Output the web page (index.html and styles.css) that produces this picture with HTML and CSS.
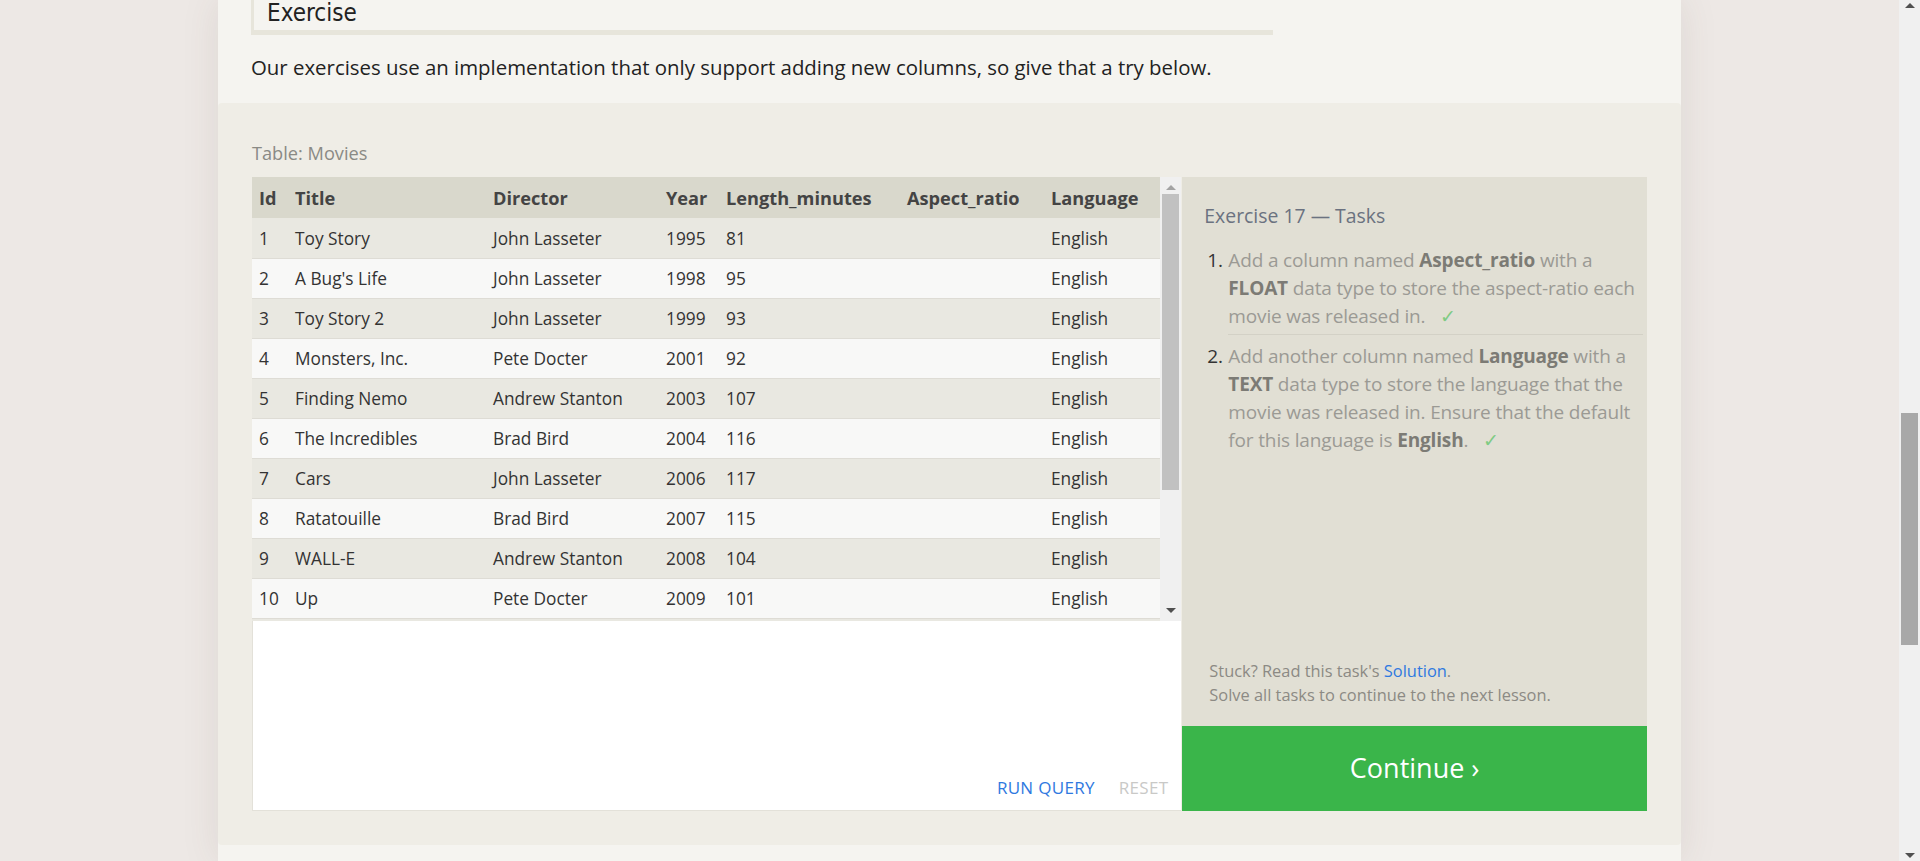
FILE: index.html
```html
<!DOCTYPE html>
<html lang="en">
<head>
<meta charset="utf-8">
<title>SQL Lesson – Altering tables</title>
<link rel="stylesheet" href="styles.css">
</head>
<body>
<div class="viewport">
  <div class="page">
    <div class="column">
      <div class="intro">
        <h2 class="ex-heading">Exercise</h2>
        <p class="lead">Our exercises use an implementation that only support adding new columns, so give that a try below.</p>
      </div>
      <section class="exercise">
        <div class="table-label">Table: Movies</div>
        <div class="workspace">
          <div class="left">
            <div class="table-wrap">
              <div class="table-clip">
                <table class="movies">
                  <colgroup>
                    <col class="c-id"><col class="c-title"><col class="c-dir"><col class="c-year"><col class="c-len"><col class="c-asp"><col class="c-lang">
                  </colgroup>
                  <thead>
                    <tr><th>Id</th><th>Title</th><th>Director</th><th>Year</th><th>Length_minutes</th><th>Aspect_ratio</th><th>Language</th></tr>
                  </thead>
                  <tbody>
                    <tr><td>1</td><td>Toy Story</td><td>John Lasseter</td><td>1995</td><td>81</td><td></td><td>English</td></tr>
                    <tr><td>2</td><td>A Bug's Life</td><td>John Lasseter</td><td>1998</td><td>95</td><td></td><td>English</td></tr>
                    <tr><td>3</td><td>Toy Story 2</td><td>John Lasseter</td><td>1999</td><td>93</td><td></td><td>English</td></tr>
                    <tr><td>4</td><td>Monsters, Inc.</td><td>Pete Docter</td><td>2001</td><td>92</td><td></td><td>English</td></tr>
                    <tr><td>5</td><td>Finding Nemo</td><td>Andrew Stanton</td><td>2003</td><td>107</td><td></td><td>English</td></tr>
                    <tr><td>6</td><td>The Incredibles</td><td>Brad Bird</td><td>2004</td><td>116</td><td></td><td>English</td></tr>
                    <tr><td>7</td><td>Cars</td><td>John Lasseter</td><td>2006</td><td>117</td><td></td><td>English</td></tr>
                    <tr><td>8</td><td>Ratatouille</td><td>Brad Bird</td><td>2007</td><td>115</td><td></td><td>English</td></tr>
                    <tr><td>9</td><td>WALL-E</td><td>Andrew Stanton</td><td>2008</td><td>104</td><td></td><td>English</td></tr>
                    <tr><td>10</td><td>Up</td><td>Pete Docter</td><td>2009</td><td>101</td><td></td><td>English</td></tr>
                    <tr class="peek"><td></td><td></td><td></td><td></td><td></td><td></td><td></td></tr>
                  </tbody>
                </table>
              </div>
              <div class="vscroll">
                <span class="arrow up"></span>
                <div class="track"><div class="thumb"></div></div>
                <span class="arrow down"></span>
              </div>
            </div>
            <div class="editor">
              <div class="editor-actions">
                <span class="run">RUN QUERY</span>
                <span class="reset">RESET</span>
              </div>
            </div>
          </div>
          <div class="right">
            <div class="tasks">
              <h3 class="tasks-title">Exercise 17 — Tasks</h3>
              <ol class="task-list">
                <li class="task"><span class="num">1.</span><span class="task-text">Add a column named <b>Aspect_ratio</b> with a <b>FLOAT</b> data type to store the aspect-ratio each movie was released in. <span class="check">✓</span></span></li>
                <li class="task"><span class="num">2.</span><span class="task-text">Add another column named <b>Language</b> with a <b>TEXT</b> data type to store the language that the movie was released in. Ensure that the default for this language is <b>English</b>. <span class="check">✓</span></span></li>
              </ol>
            </div>
            <div class="help">
              <div>Stuck? Read this task's <span class="link">Solution</span>.</div>
              <div>Solve all tasks to continue to the next lesson.</div>
            </div>
            <div class="continue">Continue ›</div>
          </div>
        </div>
      </section>
      <div class="footer-strip"></div>
    </div>
  </div>
  <div class="page-scrollbar">
    <span class="parrow pup"></span>
    <div class="ptrack"><div class="pthumb"></div></div>
    <span class="parrow pdown"></span>
  </div>
</div>
</body>
</html>
```

FILE: styles.css
```css
* { box-sizing: border-box; }

html, body {
  margin: 0;
  padding: 0;
  height: 861px;
  overflow: hidden;
}

body {
  font-family: "Open Sans", "Noto Sans", sans-serif;
  color: #333;
  background: #ede8e5;
}

.viewport {
  display: flex;
  height: 861px;
}

.page {
  flex: 1;
  display: flex;
  justify-content: center;
  background: #ede8e5;
  overflow: hidden;
}

.column {
  width: 1463px;
  height: 861px;
  background: #f5f4f0;
  box-shadow: 0 0 36px rgba(90, 70, 60, 0.10);
  display: flex;
  flex-direction: column;
}

/* intro */
.intro {
  height: 103px;
  padding-left: 33px;
}

.ex-heading {
  margin: 0;
  width: 1022px;
  height: 35px;
  border-left: 3px solid #e7e5db;
  border-bottom: 5px solid #e7e5db;
  padding-left: 13px;
  font-family: "DejaVu Sans Condensed", "Liberation Sans Narrow", sans-serif;
  font-weight: normal;
  font-size: 24px;
  line-height: 26px;
  color: #222;
}

.lead {
  margin: 18px 0 0;
  font-size: 20.4px;
  line-height: 28px;
  color: #222;
}

/* exercise area */
.exercise {
  height: 742px;
  background: #efede6;
  border-radius: 4px;
  padding: 38px 34px 34px;
  display: flex;
  flex-direction: column;
}

.table-label {
  font-size: 18.2px;
  line-height: 24px;
  color: #8a8a85;
  margin-bottom: 12px;
}

.workspace {
  display: flex;
  height: 634px;
}

.left {
  width: 930px;
  display: flex;
  flex-direction: column;
}

.table-wrap {
  height: 444px;
  display: flex;
  background: #f9f9f8;
}

.table-clip {
  width: 908px;
  overflow: hidden;
}

.movies {
  width: 908px;
  border-collapse: collapse;
  table-layout: fixed;
  font-size: 17.3px;
}

.c-id { width: 36px; }
.c-title { width: 198px; }
.c-dir { width: 173px; }
.c-year { width: 60px; }
.c-len { width: 181px; }
.c-asp { width: 144px; }
.c-lang { width: 116px; }

.movies th {
  background: #d9d8cc;
  text-align: left;
  font-weight: bold;
  font-size: 18.2px;
  color: #444;
  height: 41px;
  padding: 0 0 0 7px;
  white-space: nowrap;
}

.movies td {
  height: 40px;
  padding: 1px 0 0 7px;
  border-bottom: 1px solid #dedcd5;
  color: #333;
  white-space: nowrap;
}

.movies tbody tr:nth-child(odd) td { background: #e9e8e1; }
.movies tbody tr:nth-child(even) td { background: #f8f8f7; }

.vscroll {
  width: 21px;
  background: #f0f0f0;
  display: flex;
  flex-direction: column;
  align-items: center;
}

.vscroll .track {
  flex: 1;
  width: 100%;
  padding: 4px 2px 0;
}

.vscroll .thumb {
  height: 296px;
  background: #c1c1c1;
}

.arrow {
  width: 0;
  height: 0;
  border-left: 5px solid transparent;
  border-right: 5px solid transparent;
}

.arrow.up {
  margin-top: 8px;
  border-bottom: 5px solid #a3a3a3;
}

.arrow.down {
  margin-bottom: 8px;
  border-top: 5px solid #505050;
}

.editor {
  flex: 1;
  background: #fff;
  border-left: 1px solid #e3e1d9;
  border-bottom: 1px solid #e3e1d9;
  display: flex;
  align-items: flex-end;
  justify-content: flex-end;
}

.editor-actions {
  display: flex;
  gap: 24px;
  padding: 0 13px 10px 0;
  font-size: 17px;
  line-height: 24px;
  letter-spacing: 0.3px;
}

.run { color: #2f79e0; }
.reset { color: #c9c9c7; }

/* right panel */
.right {
  width: 465px;
  margin-left: 1px;
  background: #e1dfd4;
  display: flex;
  flex-direction: column;
}

.tasks {
  flex: 1;
  padding: 26px 4px 0 22px;
}

.tasks-title {
  margin: 0;
  font-size: 19.4px;
  font-weight: normal;
  line-height: 26px;
  color: #6b7280;
}

.task-list {
  list-style: none;
  margin: 17px 0 0;
  padding: 0;
}

.task {
  display: flex;
  font-size: 19px;
  line-height: 28px;
  letter-spacing: -0.15px;
  color: #9b9a94;
}

.task:first-child .task-text {
  padding-bottom: 4px;
  border-bottom: 1px solid #d3d1c6;
}

.task:last-child .task-text,
.task:last-child .num {
  padding-top: 7px;
}

.num {
  width: 24px;
  padding-left: 3px;
  color: #333;
  flex: none;
}

.task-text {
  flex: 1;
}

.task-text b {
  color: #7c7b75;
}

.check {
  color: #7fcb83;
  margin-left: 10px;
}

.help {
  padding: 0 10px 19px 27px;
  font-size: 16.4px;
  line-height: 24px;
  color: #8c8a84;
}

.link { color: #2f79e0; }

.continue {
  height: 85px;
  background: #3ab54a;
  color: #fff;
  font-size: 27px;
  display: flex;
  align-items: center;
  justify-content: center;
  padding-bottom: 2px;
}

.footer-strip {
  flex: 1;
  background: #f5f4f0;
}

/* page scrollbar */
.page-scrollbar {
  width: 21px;
  background: #f0f0f0;
  display: flex;
  flex-direction: column;
  align-items: center;
}

.ptrack {
  flex: 1;
  width: 100%;
  padding: 405px 2px 0;
}

.pthumb {
  height: 232px;
  background: #a8a8a8;
}

.parrow {
  width: 0;
  height: 0;
  border-left: 5px solid transparent;
  border-right: 5px solid transparent;
}

.pup {
  margin-top: 3px;
  border-bottom: 5px solid #505050;
}

.pdown {
  margin-bottom: 3px;
  border-top: 5px solid #505050;
}
```
